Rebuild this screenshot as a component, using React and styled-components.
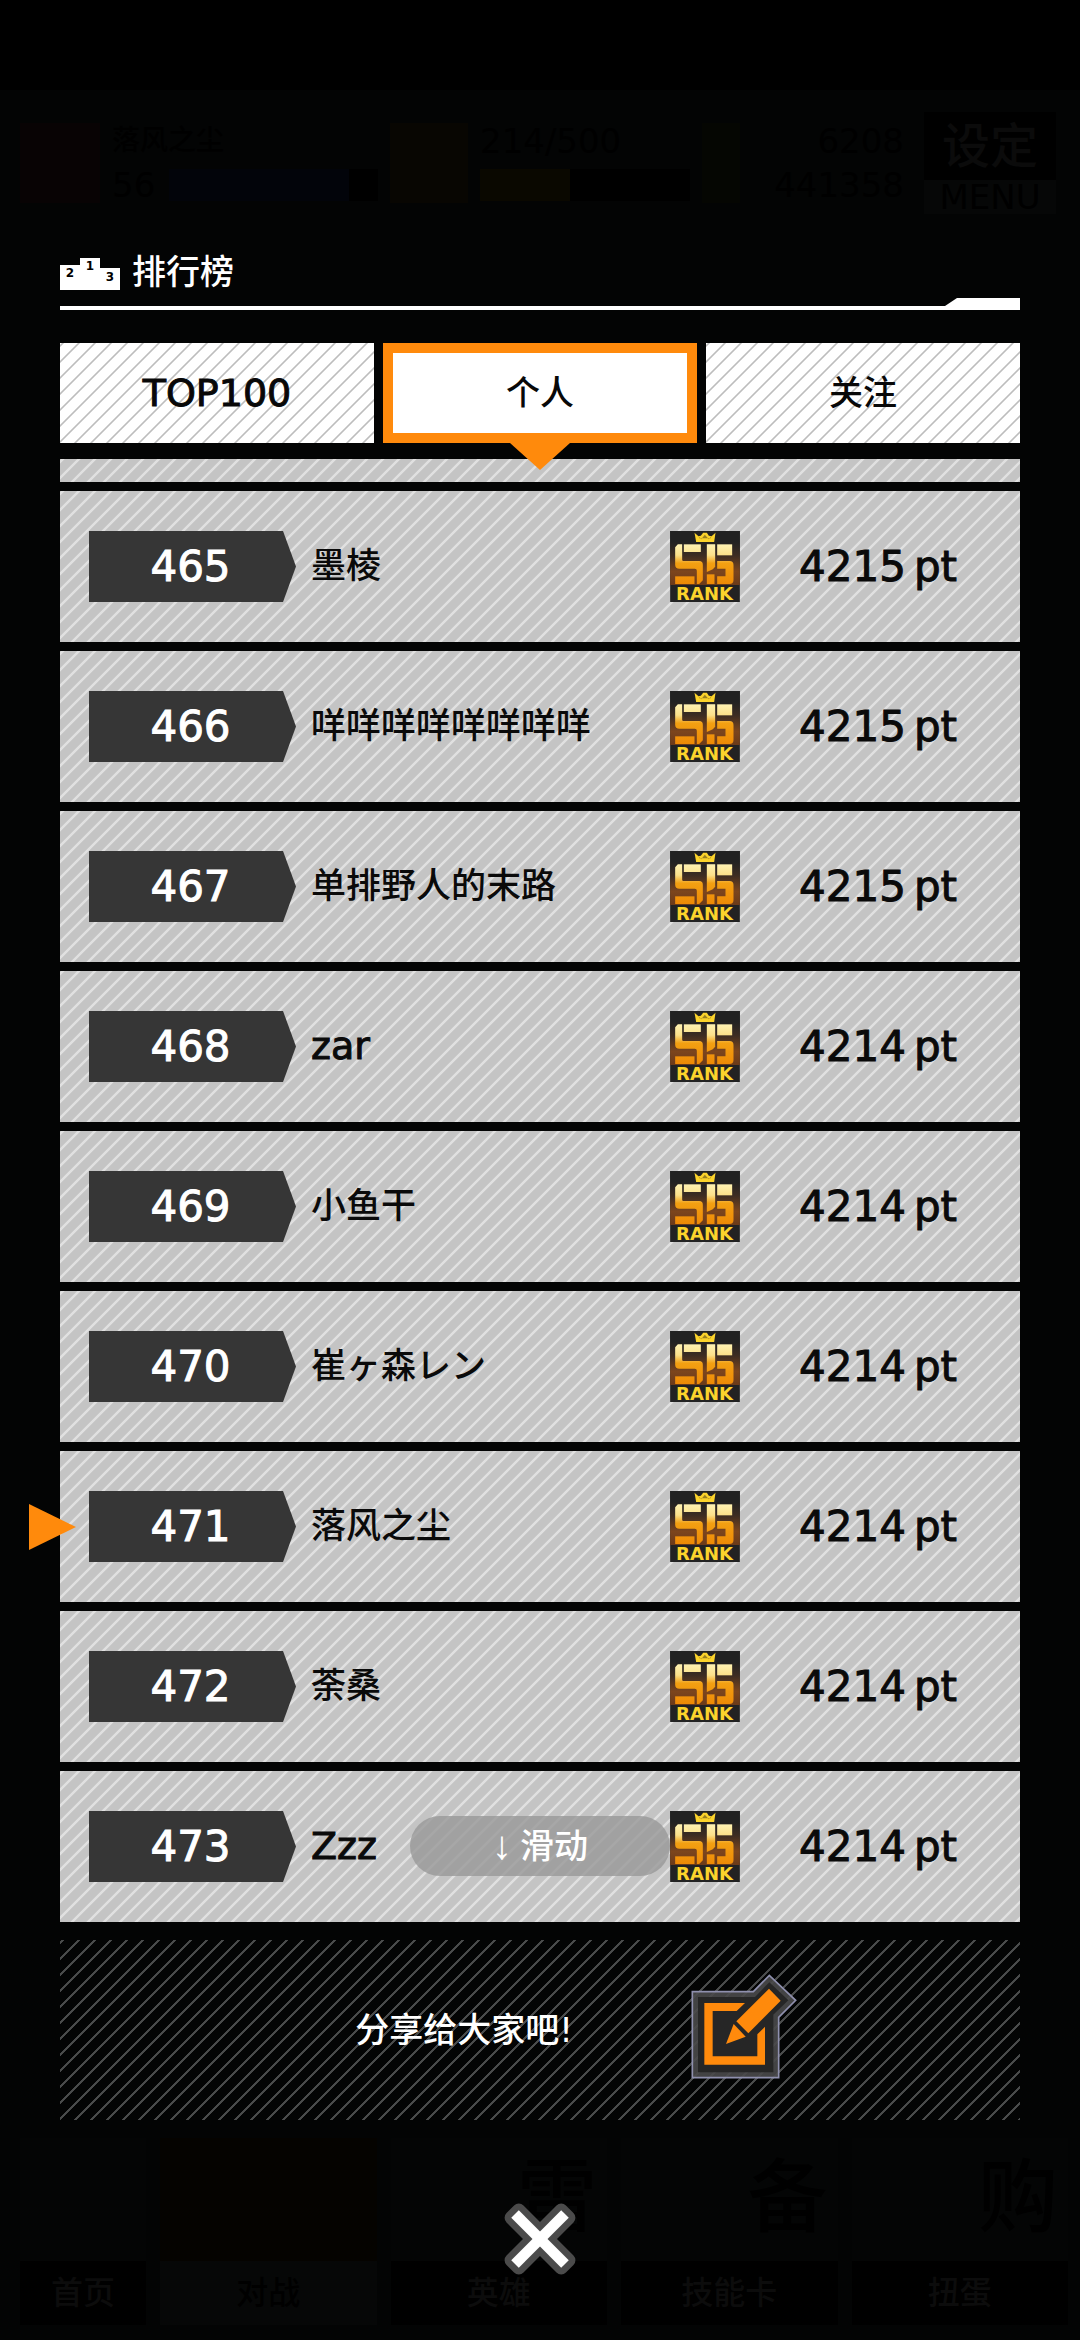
import React from "react";
import styled, { createGlobalStyle, css } from "styled-components";

const GlobalStyle = createGlobalStyle`
  *, *::before, *::after { box-sizing: border-box; }
  body {
    margin: 0;
    background: #010202;
    font-family: "DejaVu Sans", "Noto Sans CJK SC", sans-serif;
    font-weight: 500;
  }
  button { font: inherit; color: inherit; border: 0; padding: 0; margin: 0; background: none; cursor: pointer; }
  ol, ul { list-style: none; margin: 0; padding: 0; }
  h1, p { margin: 0; font: inherit; }
`;

const stripes = (line, soft, half) => css`
  background-image: linear-gradient(
    135deg,
    ${line} 0 ${half}%,
    ${soft} ${half + 3}% ${47 - half}%,
    ${line} ${50 - half}% ${50 + half}%,
    ${soft} ${53 + half}% ${97 - half}%,
    ${line} ${100 - half}%
  );
  background-size: 16px 16px;
  background-position: 3px 0;
`;

const heavy = css`
  -webkit-text-stroke: 1px currentColor;
`;

/* Page: the dimmed home screen and the dialog share one grid cell */
const Page = styled.div`
  display: grid;
  grid-template-columns: minmax(0, 1fr);
  min-height: 100vh;
  background: linear-gradient(#000 0 90px, #030404 90px);
  & > * { grid-area: 1 / 1; }
`;

const Home = styled.div`
  display: flex;
  flex-direction: column;
  justify-content: space-between;
  padding: 112px 12px 15px 20px;
  color: #000;
`;
const StatusBar = styled.div`
  display: grid;
  grid-template-columns: 80px 266px 78px 210px 38px 152px 1fr;
  column-gap: 12px;
  align-items: center;
  font-size: 34px;
  line-height: 44px;
`;
const DimBox = styled.div`
  height: 80px;
  background: ${(p) => p.$color};
`;
const DimBar = styled.div`
  flex: 1;
  height: 32px;
  background: linear-gradient(90deg, ${(p) => p.$color} ${(p) => p.$fill}, #000 0);
`;
const Stat = styled.div`
  text-align: ${(p) => p.$align || "left"};
`;
const PlayerName = styled.div`
  font-size: 28px;
`;
const StatLine = styled.div`
  display: flex;
  align-items: center;
  gap: 14px;
  height: 44px;
`;
const DimMenu = styled.div`
  display: flex;
  flex-direction: column;
  margin: 0 12px 0 8px;
  text-align: center;
  background: #060707;
  color: #000;
  line-height: 34px;
`;
const DimMenuTop = styled.div`
  background: #000;
  color: #0b0b0b;
  font-size: 48px;
  line-height: 68px;
`;
const DimNav = styled.div`
  display: grid;
  grid-template-columns: 126px repeat(4, 1fr);
  gap: 14px;
  text-align: center;
`;
const DimTab = styled.div`
  background: ${(p) => p.$color || "#040505"};
`;
const DimGlyph = styled.div`
  height: 123px;
  padding-right: 10px;
  text-align: right;
  font-size: 80px;
  line-height: 120px;
  color: #000;
`;
const DimLabel = styled.div`
  background: ${(p) => (p.$on ? "#060707" : "#000")};
  color: ${(p) => (p.$on ? "#000" : "#0c0c0c")};
  font-size: 32px;
  line-height: 64px;
`;

/* Dialog */
const Dialog = styled.main`
  display: flex;
  flex-direction: column;
  padding: 246px 60px 0;
`;
const Header = styled.header`
  display: flex;
  align-items: center;
  gap: 12px;
  height: 52px;
  color: #fff;
  font-size: 34px;
  line-height: 52px;
  & svg { margin-top: 4px; }
`;
const Rule = styled.div`
  height: 12px;
  background: #fff;
  clip-path: polygon(0 8px, calc(100% - 75px) 8px, calc(100% - 63px) 0, 100% 0, 100% 100%, 0 100%);
`;
const Tabs = styled.nav`
  display: grid;
  grid-template-columns: repeat(3, 1fr);
  gap: 9px;
  margin: 33px 0 16px;
`;
const Tab = styled.button`
  position: relative;
  height: 100px;
  font-size: ${(p) => (p.$latin ? 38 : 34)}px;
  line-height: 48px;
  color: #080808;
  background-color: #fff;
  ${(p) => p.$latin && heavy}
  ${(p) =>
    p.$active
      ? css`
          border: 10px solid #ff8a0c;
          &::after {
            content: "";
            position: absolute;
            z-index: 1;
            left: 50%;
            top: 90px;
            margin-left: -30px;
            border: 30px solid transparent;
            border-top: 27px solid #ff8a0c;
            border-bottom: 0;
          }
        `
      : stripes("#bdbdbd", "#fff", 2)}
`;
const Ranking = styled.section`
  position: relative;
`;
const Rows = styled.ol`
  display: flex;
  flex-direction: column;
  gap: 9px;
`;
const Row = styled.li`
  position: relative;
  display: flex;
  align-items: center;
  height: ${(p) => (p.$peek ? 23 : 151)}px;
  padding-left: 29px;
  color: #0a0a0a;
  background-color: #c4c4c4;
  ${stripes("#e0e0e0", "#c4c4c4", 4)}
  ${(p) =>
    p.$mine &&
    css`
      &::before {
        content: "";
        position: absolute;
        left: -31px;
        border: 23px solid transparent;
        border-left: 47px solid #ff8a0c;
        border-right: 0;
      }
    `}
`;
const Place = styled.span`
  width: 207px;
  padding-right: 4px;
  background: #363636;
  clip-path: polygon(0 0, calc(100% - 13px) 0, 100% 50%, calc(100% - 13px) 100%, 0 100%);
  color: #fff;
  font-size: 42px;
  line-height: 71px;
  text-align: center;
  ${heavy}
`;
const Name = styled.span`
  flex: 1;
  min-width: 0;
  padding-left: 15px;
  font-size: ${(p) => (p.$latin ? 38 : 35)}px;
  line-height: 71px;
  white-space: nowrap;
  ${(p) => p.$latin && heavy}
`;
const Points = styled.span`
  display: flex;
  gap: 8px;
  width: 280px;
  padding-left: 59px;
  font-size: 42px;
  line-height: 71px;
  ${heavy}
`;
const SwipeHint = styled.div`
  position: absolute;
  left: 50%;
  bottom: 46px;
  display: flex;
  align-items: center;
  justify-content: center;
  gap: 8px;
  width: 260px;
  height: 60px;
  margin-left: -130px;
  border-radius: 30px;
  background: rgba(152, 152, 152, 0.8);
  color: #fff;
  font-size: 34px;
  line-height: 60px;
`;
const Arrow = styled.span`
  font-family: "Liberation Serif", serif;
  font-size: 40px;
`;
const Share = styled.section`
  display: flex;
  align-items: center;
  justify-content: center;
  gap: 118px;
  height: 180px;
  margin-top: 18px;
  padding-left: 72px;
  color: #fff;
  font-size: 34px;
  line-height: 48px;
  ${stripes("#4a4c4c", "rgba(2,3,3,0)", 3)}
`;
const IconButton = styled.button`
  display: block;
  & svg { display: block; }
`;
const Footer = styled.footer`
  display: flex;
  justify-content: center;
  padding: 79px 0 40px;
`;

const Podium = () => (
  <svg width="60" height="32" viewBox="0 0 60 32" aria-hidden="true">
    <path d="M0 7H20V0H40V10H60V32H0Z" fill="#fff" />
    <g fill="#000" fontFamily="DejaVu Sans, sans-serif" fontWeight="700" fontSize="12" textAnchor="middle">
      <text x="10" y="19">2</text>
      <text x="30" y="12">1</text>
      <text x="50" y="23">3</text>
    </g>
  </svg>
);

const RankSvg = styled.svg`
  overflow: visible;
`;

const RankIcon = () => (
  <RankSvg width="70" height="71" viewBox="30 33 209 213" role="img" aria-label="S6 RANK">
    <defs>
      <linearGradient id="plate" x1="0" x2="0" y1="33" y2="195" gradientUnits="userSpaceOnUse">
        <stop offset="0.2" stopColor="#222" />
        <stop offset="0.45" stopColor="#3c2c22" />
        <stop offset="0.75" stopColor="#7c451d" />
        <stop offset="1" stopColor="#6a3a1a" />
      </linearGradient>
      <linearGradient id="gold" x1="0" x2="0" y1="72" y2="192" gradientUnits="userSpaceOnUse">
        <stop offset="0" stopColor="#fff3b4" />
        <stop offset="0.28" stopColor="#fbe08a" />
        <stop offset="0.48" stopColor="#f3a012" />
        <stop offset="1" stopColor="#ee8a06" />
      </linearGradient>
    </defs>
    <rect x="30" y="33" width="209" height="213" fill="#222" />
    <rect x="30" y="33" width="209" height="162" fill="url(#plate)" />
    <path d="M103 38L115 49L122 47L129 38H140L146 47L154 49L166 38L162 66H108Z" fill="#fbd32c" />
    <path d="M116 50L123 58L134 44L146 58L153 50L152 55H117Z" fill="#3a2e12" opacity="0.5" />
    <g fill="url(#gold)">
      <path d="M71 73H122V96H71Z" />
      <path d="M53 73H66V119Q66 123 70 123H117Q128 123 128 134V181L117 192H110V152Q110 146 104 146H58Q45 146 45 134V82Z" />
      <path d="M45 169H103V192H45Z" />
      <path d="M140 73H165V140L158 148L140 156Z" />
      <path d="M171 73H216V106H171Z" />
      <path d="M171 123H208Q220 123 220 135V180Q220 192 208 192H171V169H196V146H171Z" />
      <path d="M140 163H163V192H140Z" />
    </g>
    <text x="133" y="240" textAnchor="middle" fill="#fbd32c" fontFamily="DejaVu Sans, sans-serif" fontWeight="700" fontSize="54">RANK</text>
  </RankSvg>
);

const EditIcon = () => (
  <svg width="106" height="113" viewBox="30 36 318 339" aria-hidden="true">
    <path d="M34 89H217L265 40L344 115L293 166V347H34Z" fill="#4a4a4b" fillOpacity="0.9" stroke="#8f90ae" strokeWidth="5" />
    <path d="M51 105H222L265 61L322 115L277 158V331H51Z" fill="#262626" />
    <path d="M70 123H192L167 147H95V283H229V217L252 194V308H70Z" fill="#ff8a0c" />
    <path d="M264 80L299 116L202 214L166 178Z" fill="#ff8a0c" />
    <path d="M158 186L194 224L135 246Z" fill="#ff8a0c" />
  </svg>
);

const CloseIcon = () => (
  <svg width="80" height="80" viewBox="-120 -120 240 240" aria-hidden="true">
    <g stroke="#4b4b4b" strokeWidth="40" strokeLinejoin="round" fill="#4b4b4b">
      <rect x="-106" y="-16" width="212" height="32" transform="rotate(45)" />
      <rect x="-106" y="-16" width="212" height="32" transform="rotate(-45)" />
    </g>
    <g fill="#fff">
      <rect x="-106" y="-16" width="212" height="32" transform="rotate(45)" />
      <rect x="-106" y="-16" width="212" height="32" transform="rotate(-45)" />
    </g>
  </svg>
);

const players = [
  { place: 465, name: "墨棱", points: 4215 },
  { place: 466, name: "咩咩咩咩咩咩咩咩", points: 4215 },
  { place: 467, name: "单排野人的末路", points: 4215 },
  { place: 468, name: "zar", points: 4214, latin: true },
  { place: 469, name: "小鱼干", points: 4214 },
  { place: 470, name: "崔ヶ森レン", points: 4214 },
  { place: 471, name: "落风之尘", points: 4214, mine: true },
  { place: 472, name: "荼桑", points: 4214 },
  { place: 473, name: "Zzz", points: 4214, latin: true },
];

function HomeScreen() {
  return (
    <Home aria-hidden="true">
      <StatusBar>
        <DimBox $color="#080304" />
        <Stat>
          <PlayerName>落风之尘</PlayerName>
          <StatLine>56<DimBar $color="#02040a" $fill="86%" /></StatLine>
        </Stat>
        <DimBox $color="#080602" />
        <Stat>
          <div>214/500</div>
          <StatLine><DimBar $color="#0a0800" $fill="43%" /></StatLine>
        </Stat>
        <DimBox $color="#050602" />
        <Stat $align="right">
          <div>6208</div>
          <div>441358</div>
        </Stat>
        <DimMenu>
          <DimMenuTop>设定</DimMenuTop>
          <div>MENU</div>
        </DimMenu>
      </StatusBar>
      <DimNav>
        <DimTab><DimGlyph /><DimLabel>首页</DimLabel></DimTab>
        <DimTab $color="#050300"><DimGlyph /><DimLabel $on>对战</DimLabel></DimTab>
        <DimTab><DimGlyph>雷</DimGlyph><DimLabel>英雄</DimLabel></DimTab>
        <DimTab><DimGlyph>备</DimGlyph><DimLabel>技能卡</DimLabel></DimTab>
        <DimTab><DimGlyph>购</DimGlyph><DimLabel>扭蛋</DimLabel></DimTab>
      </DimNav>
    </Home>
  );
}

export default function App() {
  return (
    <>
      <GlobalStyle />
      <Page>
        <HomeScreen />
        <Dialog>
          <Header>
            <Podium />
            <h1>排行榜</h1>
          </Header>
          <Rule />
          <Tabs>
            <Tab $latin>TOP100</Tab>
            <Tab $active aria-current="page">个人</Tab>
            <Tab>关注</Tab>
          </Tabs>
          <Ranking>
            <Rows>
              <Row $peek aria-hidden="true" />
              {players.map((p) => (
                <Row key={p.place} $mine={p.mine}>
                  <Place>{p.place}</Place>
                  <Name $latin={p.latin}>{p.name}</Name>
                  <RankIcon />
                  <Points>
                    <span>{p.points}</span>
                    <span>pt</span>
                  </Points>
                </Row>
              ))}
            </Rows>
            <SwipeHint>
              <Arrow>↓</Arrow>
              <span>滑动</span>
            </SwipeHint>
          </Ranking>
          <Share>
            <p>分享给大家吧!</p>
            <IconButton aria-label="分享"><EditIcon /></IconButton>
          </Share>
          <Footer>
            <IconButton aria-label="关闭"><CloseIcon /></IconButton>
          </Footer>
        </Dialog>
      </Page>
    </>
  );
}
